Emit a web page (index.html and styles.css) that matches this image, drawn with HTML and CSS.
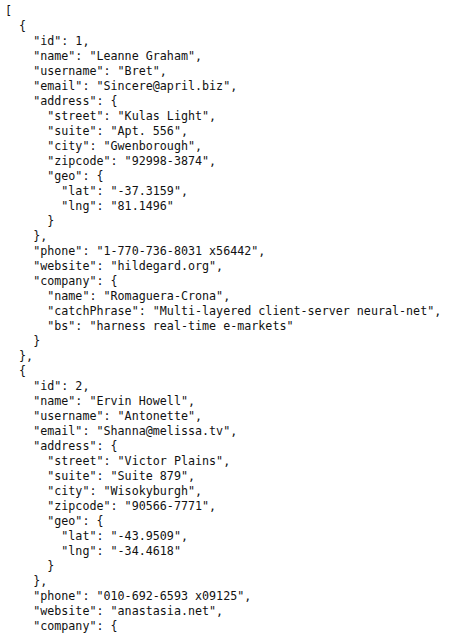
FILE: index.html
```html
<!DOCTYPE html>
<html>
<head>
<meta charset="utf-8">
<link rel="stylesheet" href="styles.css">
</head>
<body>
<pre class="json">[
  {
    "id": 1,
    "name": "Leanne Graham",
    "username": "Bret",
    "email": "Sincere@april.biz",
    "address": {
      "street": "Kulas Light",
      "suite": "Apt. 556",
      "city": "Gwenborough",
      "zipcode": "92998-3874",
      "geo": {
        "lat": "-37.3159",
        "lng": "81.1496"
      }
    },
    "phone": "1-770-736-8031 x56442",
    "website": "hildegard.org",
    "company": {
      "name": "Romaguera-Crona",
      "catchPhrase": "Multi-layered client-server neural-net",
      "bs": "harness real-time e-markets"
    }
  },
  {
    "id": 2,
    "name": "Ervin Howell",
    "username": "Antonette",
    "email": "Shanna@melissa.tv",
    "address": {
      "street": "Victor Plains",
      "suite": "Suite 879",
      "city": "Wisokyburgh",
      "zipcode": "90566-7771",
      "geo": {
        "lat": "-43.9509",
        "lng": "-34.4618"
      }
    },
    "phone": "010-692-6593 x09125",
    "website": "anastasia.net",
    "company": {</pre>
</body>
</html>
```
FILE: styles.css
```css
html, body {
  background: #fff;
}
body {
  margin: 0;
  padding: 4px 5px 0;
}
.json {
  margin: 0;
  font-family: "DejaVu Sans Mono", "Liberation Mono", monospace;
  font-size: 11.7px;
  line-height: 15px;
  color: #111;
  white-space: pre;
}
```
